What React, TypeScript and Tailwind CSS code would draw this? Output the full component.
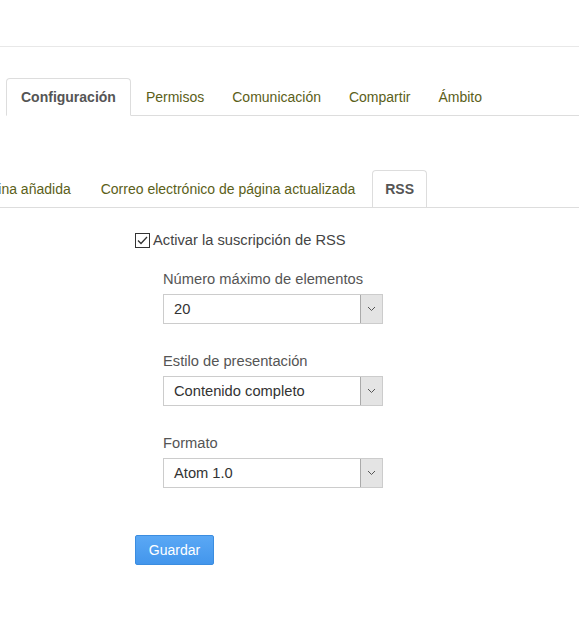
import React from 'react';

const tabsTop = ['Configuración', 'Permisos', 'Comunicación', 'Compartir', 'Ámbito'];
const tabsSub = [
  'Correo electrónico de página añadida',
  'Correo electrónico de página actualizada',
  'RSS',
];

function Tab({ label, active, wide }: { label: string; active?: boolean; wide?: boolean }) {
  const pad = wide ? 'px-[14px]' : 'px-[12px]';
  return (
    <li
      className={
        active
          ? `-mb-px mr-[2px] flex h-[38px] items-center whitespace-nowrap rounded-t-[4px] border border-[#dddddd] border-b-white bg-white font-bold text-[#555555] ${pad}`
          : `-mb-px mr-[2px] flex h-[38px] items-center whitespace-nowrap border border-transparent text-[#5b6019] ${pad}`
      }
    >
      {label}
    </li>
  );
}

function Chevron() {
  return (
    <svg width="9" height="6" viewBox="0 0 9 6" fill="none">
      <path d="M1 1l3.5 3.5L8 1" stroke="#555" strokeWidth="1" />
    </svg>
  );
}

function SelectBox({ value }: { value: string }) {
  return (
    <div className="flex h-[30px] w-[220px] items-stretch border border-[#cccccc] bg-white">
      <div className="flex flex-1 items-center pl-[10px] text-[#333333]">{value}</div>
      <div className="flex w-[22px] items-center justify-center border-l border-[#aaaaaa] bg-[#e4e4e4]">
        <Chevron />
      </div>
    </div>
  );
}

function Field({ label, value }: { label: string; value: string }) {
  return (
    <div className="flex flex-col">
      <div className="mb-[5px] h-[20px] leading-[20px] text-[#555555]">{label}</div>
      <SelectBox value={value} />
    </div>
  );
}

export default function App() {
  return (
    <div className="min-h-[617px] overflow-hidden bg-white text-[14px] font-['Liberation_Sans',Arial,sans-serif]">
      <div className="h-[47px] border-b border-[#e8e8e8]" />

      {/* main tabs */}
      <ul className="ml-[6px] mt-[31px] flex border-b border-[#dddddd]">
        {tabsTop.map((t, i) => (
          <Tab key={t} label={t} active={i === 0} wide={i === 0} />
        ))}
      </ul>

      {/* sub tabs, scrolled so the first is cut off */}
      <div className="mt-[54px] overflow-hidden border-b border-[#dddddd]">
        <ul className="flex w-[429px] justify-end">
          {tabsSub.map((t, i) => (
            <Tab key={t} label={t} active={i === 2} wide={i === 1} />
          ))}
        </ul>
      </div>

      <div className="ml-[135px] mt-[22px] flex flex-col text-[14.7px]">
        <label className="flex h-[20px] items-center text-[#444444]">
          <span className="flex h-[15px] w-[15px] items-center justify-center border border-[#333333] bg-white">
            <svg width="11" height="9" viewBox="0 0 11 9" fill="none">
              <path d="M1 4.5l3 3L10 1" stroke="#333" strokeWidth="1.3" />
            </svg>
          </span>
          <span className="ml-[3px]">Activar la suscripción de RSS</span>
        </label>

        <div className="ml-[28px] mt-[19px] flex flex-col gap-[27px]">
          <Field label="Número máximo de elementos" value="20" />
          <Field label="Estilo de presentación" value="Contenido completo" />
          <Field label="Formato" value="Atom 1.0" />
        </div>

        <div className="mt-[47px]">
          <button className="h-[30px] w-[79px] rounded-[2px] border border-[#3b8de0] bg-gradient-to-b from-[#5aa8f5] to-[#4396ec] text-[14px] text-white">
            Guardar
          </button>
        </div>
      </div>
    </div>
  );
}
